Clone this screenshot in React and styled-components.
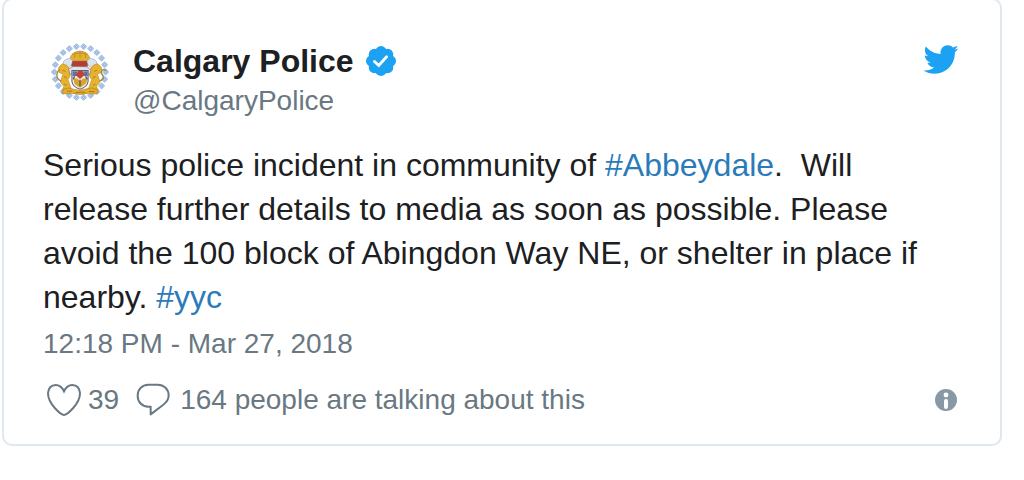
import React from "react";
import styled, { createGlobalStyle } from "styled-components";

const fontBase = `"Liberation Sans", Arial, sans-serif`;
const colorText = "#1c2022";
const colorMuted = "#697882";
const colorLink = "#2b7bb9";
const colorTwitter = "#1da1f2";

const GlobalStyle = createGlobalStyle`
  body {
    margin: 0;
    background: #fff;
    font-family: ${fontBase};
  }
`;

const Card = styled.article`
  margin: -2px 22px 0 2px;
  padding: 37px 41px 24px 39px;
  border: 2px solid #e1e8ed;
  border-radius: 10px;
  color: ${colorText};
  background: #fff;
`;

const Link = styled.a`
  color: ${colorLink};
  text-decoration: none;
`;

const Header = styled.header`
  display: flex;
  align-items: flex-start;
  justify-content: space-between;
`;

const Author = styled.a`
  display: flex;
  gap: 18px;
  color: inherit;
  text-decoration: none;
`;

const Names = styled.div`
  display: flex;
  flex-direction: column;
  padding-top: 4px;
`;

const Name = styled.span`
  display: flex;
  align-items: center;
  gap: 12px;
  font-size: 32px;
  font-weight: 700;
  line-height: 40px;
`;

const Handle = styled.span`
  font-size: 28px;
  line-height: 40px;
  color: ${colorMuted};
`;

const BrandLink = styled.a`
  display: flex;
  margin-top: 4px;
`;

const Message = styled.p`
  margin: 22px 0 0;
  font-size: 32px;
  line-height: 44px;
  white-space: pre-wrap;
`;

const DateLink = styled.a`
  display: block;
  margin-top: 5px;
  font-size: 28px;
  line-height: 40px;
  color: ${colorMuted};
  text-decoration: none;
`;

const Footer = styled.footer`
  display: flex;
  align-items: center;
  justify-content: space-between;
  margin-top: 16px;
`;

const Stats = styled.div`
  display: flex;
  gap: 16px;
  padding-left: 3px;
`;

const Stat = styled.a`
  display: flex;
  align-items: center;
  gap: ${(props) => props.$gap}px;
  font-size: 28px;
  line-height: 40px;
  color: ${colorMuted};
  text-decoration: none;
`;

const InfoLink = styled.a`
  display: flex;
  margin-right: 2px;
`;

const ring = (count, radius, offset) =>
  Array.from({ length: count }, (_, i) => {
    const angle = ((i + offset) * 2 * Math.PI) / count;
    return [Math.sin(angle) * radius, -Math.cos(angle) * radius];
  });

const Crest = () => (
  <svg width="72" height="72" viewBox="13 5 216 216" role="img" aria-label="Calgary Police crest">
    <g fill="#b3cdec" stroke="#8fb0da" strokeWidth="2">
      {ring(22, 77, 0.5).map(([x, y]) => (
        <g key={`${x}${y}`} transform={`translate(${124 + x} ${110 + y})`}>
          <path d="M0-9L5-5 9 0 5 5 0 9-5 5-9 0-5-5z" />
          <circle r="3" fill="#dce9f8" stroke="#7d9fcb" />
        </g>
      ))}
    </g>
    <g transform="translate(124 112) scale(1.1) translate(-124 -114)">
      <path d="M97 75q4-18 27-20 22 2 27 20l-9 9h-36z" fill="#e3b02d" stroke="#b98a2a" strokeWidth="2" />
      <path d="M103 65q21-10 42 0M111 58l-2 16M124 55v18M137 58l3 16" fill="none" stroke="#c4942c" strokeWidth="3" />
      <path d="M79 84q7-10 20-8l7 10-12 14-15-2zM169 84q-7-10-20-8l-8 10 12 14 17-2z" fill="#dce4ed" stroke="#a3b0c0" strokeWidth="2" />
      <path d="M66 99l10-9 12 4 8 12 1 18-6 9 8 22-4 7H76l4-11-9-10 3-13 4-10-12-5zM182 99l-10-9-12 4-9 12-1 18 6 9-8 22 4 7h21l-4-11 9-10-3-13-4-10 12-5z" fill="#e8b32c" stroke="#c39332" strokeWidth="2" />
      <path d="M73 137q-13-6-12-17t8-16M177 137q13-5 10-15-8-7-3-15 8-4 11 2" fill="none" stroke="#a48a4c" strokeWidth="4" />
      <path d="M76 107l8 4M80 124l8 5M81 145l7 4M171 107l-8 4M167 124l-8 5M166 145l-7 4" stroke="#b3883a" strokeWidth="3" />
      <path d="M104 83h38l3 12-9 10h-25l-10-9z" fill="#b53b35" stroke="#855055" strokeWidth="2" />
      <path d="M93 104l12-7 38 1 11 9-4 12-54-1z" fill="#dfe5ed" stroke="#8c7a66" strokeWidth="2" />
      <path d="M102 108h44v30q-2 15-22 21-20-6-22-21z" fill="#f0ede5" stroke="#6b6070" strokeWidth="3" />
      <path d="M104 110h13v13h-13zM133 110h12v13h-12z" fill="#5874a8" />
      <path d="M119 109h12l5 12-12 10-11-9z" fill="#c74131" />
      <path d="M106 130h11l7 8 8-8h12l-3 13-17 12-15-10z" fill="#dba425" />
      <path d="M109 124l-3 8M139 124l5 8M124 133v18" stroke="#5b5870" strokeWidth="4" />
      <path d="M80 159q13-7 25 0 19 7 38-1 15-6 26 2l6 9q-17 6-28 1-22 7-45 0-13 4-28 0z" fill="#e6ad25" stroke="#b18430" strokeWidth="2" />
      <path d="M88 165l15-1M112 168l26-1M148 165l16 1" stroke="#8c672b" strokeWidth="2" />
    </g>
  </svg>
);

const VerifiedBadge = () => (
  <svg width="30" height="30" viewBox="-16 -16 32 32" role="img" aria-label="Verified account">
    <g fill={colorTwitter}>
      <circle r="14" />
      {ring(8, 10, 0).map(([x, y]) => (
        <circle key={`${x}${y}`} cx={x} cy={y} r="6" />
      ))}
    </g>
    <path d="M-7 0.5l4.6 4.3L6-4.5" fill="none" stroke="#fff" strokeWidth="3" strokeLinecap="round" />
  </svg>
);

const Bird = () => (
  <svg width="37" height="37" viewBox="0 0 24 24" role="img" aria-label="Twitter">
    <path
      fill={colorTwitter}
      d="M23.643 4.937c-.835.37-1.732.62-2.675.733.962-.576 1.7-1.49 2.048-2.578-.9.534-1.897.922-2.958 1.13-.85-.904-2.06-1.47-3.4-1.47-2.572 0-4.658 2.086-4.658 4.66 0 .364.042.718.12 1.06-3.873-.195-7.304-2.05-9.602-4.868-.4.69-.63 1.49-.63 2.342 0 1.616.823 3.043 2.072 3.878-.764-.025-1.482-.234-2.11-.583v.06c0 2.257 1.605 4.14 3.737 4.568-.392.106-.803.162-1.227.162-.3 0-.593-.028-.877-.082.593 1.85 2.313 3.198 4.352 3.234-1.595 1.25-3.604 1.995-5.786 1.995-.376 0-.747-.022-1.112-.065 2.062 1.323 4.51 2.093 7.14 2.093 8.57 0 13.255-7.098 13.255-13.254 0-.2-.005-.402-.014-.602.91-.658 1.7-1.477 2.323-2.41z"
    />
  </svg>
);

const Heart = () => (
  <svg width="36" height="36" viewBox="33 21 108 108" aria-hidden="true">
    <path
      d="M87 120C79 120 39 88 39 55 39 40 49 30 62 30c12 0 20 8 25 19 5-11 13-19 25-19 13 0 23 10 23 25 0 33-40 65-48 65z"
      fill="none"
      stroke={colorMuted}
      strokeWidth="6"
    />
  </svg>
);

const Bubble = () => (
  <svg width="36" height="36" viewBox="303 21 108 108" aria-hidden="true">
    <path
      d="M343 29h28c19 0 33 14 33 32 0 14-7 22-17 29l-37 28V95h-7c-19 0-32-14-32-33 0-18 13-33 32-33z"
      fill="none"
      stroke={colorMuted}
      strokeWidth="6"
      strokeLinejoin="round"
    />
  </svg>
);

const InfoIcon = () => (
  <svg width="22" height="22" viewBox="0 0 22 22" role="img" aria-label="Twitter Ads info and privacy">
    <circle cx="11" cy="11" r="11" fill="#8899a6" />
    <circle cx="11" cy="6" r="2.4" fill="#fff" />
    <path d="M11 12v6" stroke="#fff" strokeWidth="4" strokeLinecap="round" />
  </svg>
);

const TweetHeader = () => {
  return (
    <Header>
      <Author href="#profile">
        <Crest />
        <Names>
          <Name>
            Calgary Police
            <VerifiedBadge />
          </Name>
          <Handle>@CalgaryPolice</Handle>
        </Names>
      </Author>
      <BrandLink href="#twitter">
        <Bird />
      </BrandLink>
    </Header>
  );
};

const TweetFooter = () => {
  return (
    <Footer>
      <Stats>
        <Stat href="#like" $gap={6}>
          <Heart />
          39
        </Stat>
        <Stat href="#replies" $gap={9}>
          <Bubble />
          164 people are talking about this
        </Stat>
      </Stats>
      <InfoLink href="#info">
        <InfoIcon />
      </InfoLink>
    </Footer>
  );
};

const App = () => {
  return (
    <>
      <GlobalStyle />
      <Card>
        <TweetHeader />
        <Message>
          Serious police incident in community of <Link href="#abbeydale">#Abbeydale</Link>
          {".  Will release further details to media as soon as possible. Please avoid the 100 block of Abingdon Way NE, or shelter in place if nearby. "}
          <Link href="#yyc">#yyc</Link>
        </Message>
        <DateLink href="#status">12:18 PM - Mar 27, 2018</DateLink>
        <TweetFooter />
      </Card>
    </>
  );
};

export default App;
